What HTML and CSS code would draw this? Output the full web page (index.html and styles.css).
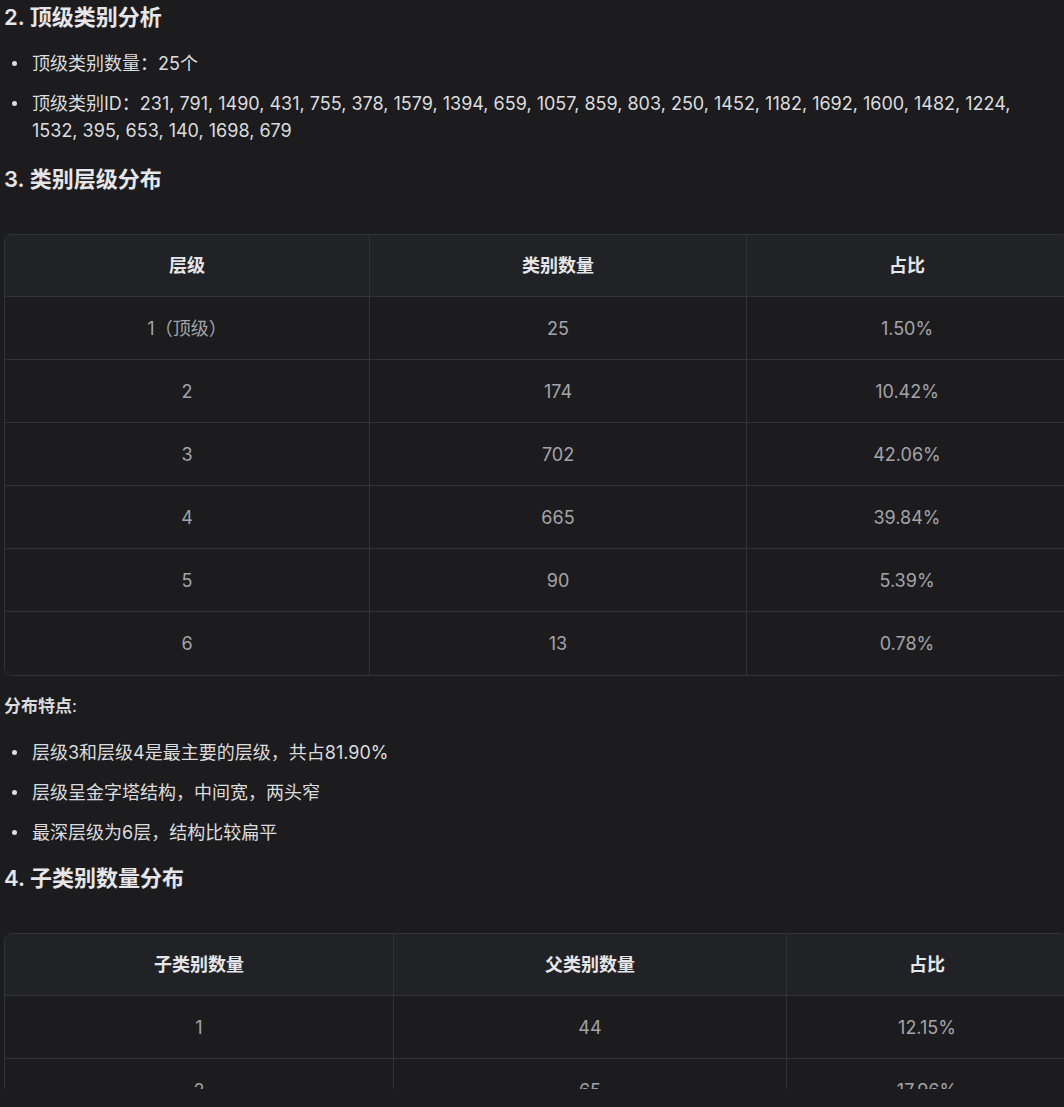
FILE: index.html
```html
<!DOCTYPE html>
<html lang="zh-CN">
<head>
<meta charset="utf-8">
<link rel="stylesheet" href="styles.css">
</head>
<body>
<div class="doc">
  <h2 class="heading">2. 顶级类别分析</h2>
  <ul class="list">
    <li>顶级类别数量：25个</li>
    <li>顶级类别ID：231, 791, 1490, 431, 755, 378, 1579, 1394, 659, 1057, 859, 803, 250, 1452, 1182, 1692, 1600, 1482, 1224, 1532, 395, 653, 140, 1698, 679</li>
  </ul>
  <h2 class="heading">3. 类别层级分布</h2>
  <div class="table-wrap">
    <table class="grid grid-a">
      <thead>
        <tr><th class="c1">层级</th><th class="c2">类别数量</th><th class="c3">占比</th></tr>
      </thead>
      <tbody>
        <tr><td>1（顶级）</td><td>25</td><td>1.50%</td></tr>
        <tr><td>2</td><td>174</td><td>10.42%</td></tr>
        <tr><td>3</td><td>702</td><td>42.06%</td></tr>
        <tr><td>4</td><td>665</td><td>39.84%</td></tr>
        <tr><td>5</td><td>90</td><td>5.39%</td></tr>
        <tr><td>6</td><td>13</td><td>0.78%</td></tr>
      </tbody>
    </table>
  </div>
  <p class="label"><strong>分布特点</strong>:</p>
  <ul class="list tail">
    <li>层级3和层级4是最主要的层级，共占81.90%</li>
    <li>层级呈金字塔结构，中间宽，两头窄</li>
    <li>最深层级为6层，结构比较扁平</li>
  </ul>
  <h2 class="heading">4. 子类别数量分布</h2>
  <div class="table-wrap">
    <table class="grid grid-b">
      <thead>
        <tr><th class="c1">子类别数量</th><th class="c2">父类别数量</th><th class="c3">占比</th></tr>
      </thead>
      <tbody>
        <tr><td>1</td><td>44</td><td>12.15%</td></tr>
        <tr><td>2</td><td>65</td><td>17.96%</td></tr>
        <tr><td>3</td><td>48</td><td>13.26%</td></tr>
      </tbody>
    </table>
  </div>
</div>
</body>
</html>
```
FILE: styles.css
```css
html, body {
  margin: 0;
  padding: 0;
  background: #1c1c1e;
}
body {
  font-family: Inter, "Noto Sans CJK SC", sans-serif;
  color: #dcdcde;
  font-size: 18px;
  line-height: 27px;
}
.doc {
  width: 1064px;
  height: 1089px;
  overflow: hidden;
  padding: 3px 0 0 4px;
  box-sizing: border-box;
}
.heading {
  margin: 0;
  font-size: 22px;
  line-height: 28px;
  font-weight: 600;
  color: #e6e6e8;
}
.list {
  list-style: none;
  margin: 19px 0 21px;
  padding: 0 24px 0 0;
}
.list.tail {
  margin-bottom: 18px;
}
.list li {
  display: flex;
  margin-top: 13px;
}
.list li:first-child {
  margin-top: 0;
}
.list li::before {
  content: "";
  flex: none;
  width: 5px;
  height: 5px;
  border-radius: 50%;
  background: #dcdcde;
  margin: 11px 15px 0 8px;
}
.table-wrap {
  margin-top: 41px;
  width: 1064px;
}
.grid {
  width: 1064px;
  table-layout: fixed;
  border-collapse: separate;
  border-spacing: 0;
  border: 1px solid #323337;
  border-radius: 8px;
  overflow: hidden;
}
.grid th, .grid td {
  text-align: center;
  border-right: 1px solid #323337;
  border-bottom: 1px solid #323337;
  padding: 0 12px;
  height: 63px;
  box-sizing: border-box;
}
.grid th:last-child, .grid td:last-child {
  border-right: none;
}
.grid tbody tr:last-child td {
  border-bottom: none;
}
.grid th {
  background: #212226;
  color: #e6e6e8;
  font-weight: 600;
  height: 62px;
}
.grid td {
  background: #1c1c1f;
  color: #a4a4a8;
}
.grid-a .c1 { width: 365px; }
.grid-a .c2 { width: 377px; }
.grid-b .c1 { width: 389px; }
.grid-b .c2 { width: 393px; }
.label {
  margin: 17px 0 17px;
  font-size: 17px;
}
.label strong {
  font-weight: 600;
}
```
